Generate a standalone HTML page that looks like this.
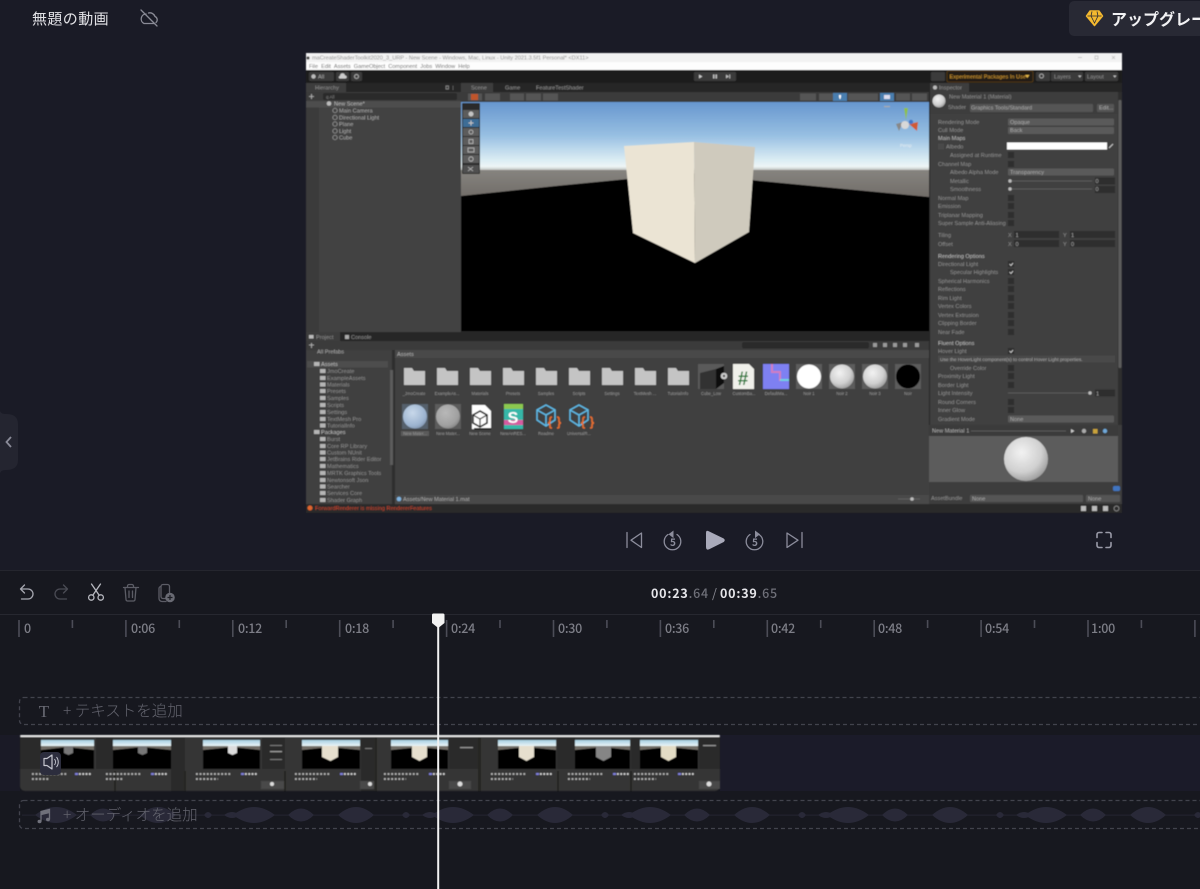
<!DOCTYPE html>
<html lang="ja"><head><meta charset="utf-8"><title>無題の動画</title>
<style>
html,body{margin:0;padding:0;background:#1a1b26;}
body{width:1200px;height:889px;overflow:hidden;position:relative;font-family:"Liberation Sans","Noto Sans CJK JP",sans-serif;}
.abs{position:absolute;}
.tm{left:0;top:571px;width:1200px;height:318px;background:#17181f;}
.jp{font-family:"Noto Sans CJK JP","Liberation Sans",sans-serif;}
svg{position:absolute;left:0;top:0;}
.t{font-family:"Liberation Sans",sans-serif;font-size:5.6px;fill:#a8a8a8;}
.d{fill:#8e8e8e;}
.b{fill:#bdbdbd;}
.s{font-size:4.2px;fill:#999;text-anchor:middle;}
.lb{font-family:"Noto Sans CJK JP","Liberation Sans",sans-serif;font-size:12.5px;font-weight:500;letter-spacing:-.3px;fill:#7d7e87;}
</style></head><body>

<div class="abs tm"></div>
<div class="abs" style="left:0;top:570px;width:1200px;height:1px;background:#25262e;"></div>
<div class="abs" style="left:0;top:614px;width:1200px;height:1px;background:#272830;"></div>

<div class="abs jp" style="left:32px;top:7px;font-size:15px;line-height:24px;letter-spacing:.4px;color:#e2e2e6;">無題の動画</div>
<div class="abs" style="left:1069px;top:1px;width:140px;height:35px;background:#282934;border-radius:5px;"></div>
<div class="abs jp" style="left:1111px;top:6px;width:89px;overflow:hidden;white-space:nowrap;font-size:16px;line-height:24px;font-weight:700;color:#f2f2f4;">アップグレード</div>

<div class="abs" style="left:720px;top:735px;width:480px;height:56px;background:#1b1b29;"></div>
<div class="abs" style="left:0;top:735px;width:20px;height:56px;background:#1a1a26;"></div>

<svg width="1200" height="889" viewBox="0 0 1200 889" xmlns="http://www.w3.org/2000/svg">
<defs>
<filter id="bl" x="-2%" y="-2%" width="104%" height="104%"><feGaussianBlur stdDeviation="0.55"/></filter>
<filter id="bl2" x="-2%" y="-2%" width="104%" height="104%"><feGaussianBlur stdDeviation="0.55"/></filter>
<linearGradient id="sky" x1="0" y1="0" x2="0" y2="1">
<stop offset="0" stop-color="#6797cf"/><stop offset=".35" stop-color="#97bfe2"/><stop offset=".6" stop-color="#d8ebf3"/><stop offset=".68" stop-color="#eef6f6"/><stop offset=".74" stop-color="#a0a09c"/><stop offset="1" stop-color="#a0a09c"/></linearGradient>
<linearGradient id="grd" x1="0" y1="0" x2="0" y2="1"><stop offset="0" stop-color="#86847f"/><stop offset="1" stop-color="#6f6a66"/></linearGradient>
<radialGradient id="sph" cx=".4" cy=".35" r=".75"><stop offset="0" stop-color="#f2f2f2"/><stop offset=".6" stop-color="#d0d0d0"/><stop offset="1" stop-color="#8d8d8d"/></radialGradient>
<radialGradient id="sphg" cx=".4" cy=".35" r=".75"><stop offset="0" stop-color="#b8b8b8"/><stop offset=".7" stop-color="#a0a0a0"/><stop offset="1" stop-color="#7c7c7c"/></radialGradient>
<radialGradient id="sphb" cx=".4" cy=".35" r=".75"><stop offset="0" stop-color="#c8d8ea"/><stop offset=".7" stop-color="#9db4d0"/><stop offset="1" stop-color="#7b8ea8"/></radialGradient>
<linearGradient id="tsky" x1="0" y1="0" x2="0" y2="1"><stop offset="0" stop-color="#a6cfe2"/><stop offset="1" stop-color="#eaf4f6"/></linearGradient>
<g id="wv" fill="#292938">
<path d="M233 815Q254 799 275 815Q254 831 233 815Z"/>
<path d="M288 815Q301 802 314 815Q301 828 288 815Z"/>
<path d="M338 815Q356 799 374 815Q356 831 338 815Z"/>
<path d="M402 815Q406 809 410 815Q406 821 402 815Z"/>
<path d="M422 815Q430 809 438 815Q430 821 422 815Z"/>
</g>
</defs>

<!-- ===== left handle ===== -->
<path d="M0 410 Q0 414 6 414 Q18 414 18 424 V460 Q18 470 6 470 Q0 470 0 474Z" fill="#242530"/>
<path d="M11 437 L6.5 442 L11 447" fill="none" stroke="#8a8b98" stroke-width="1.800"/>

<!-- ===== header icons ===== -->
<g fill="none" stroke="#8a8b96" stroke-width="1.300" stroke-linecap="round">
<path d="M146 14 A5 5 0 0 0 144 23.500 H154.500 M156 22.500 A3.600 3.600 0 0 0 155 16.500 A5.500 5.500 0 0 0 148.500 13"/>
<path d="M141 10 L157 26"/>
</g>
<path d="M1090 11 H1099 L1102.500 16 L1094.500 25.500 L1086.500 16Z" fill="#f4b92f" stroke="#f4b92f" stroke-width="1.500" stroke-linejoin="round"/>
<path d="M1087.500 16 H1101.500 M1092 11.500 L1091 16 L1094.500 23 L1098 16 L1097 11.500" fill="none" stroke="#282934" stroke-width=".8"/>

<!-- ===== video frame ===== -->
<g filter="url(#bl)">
<rect x="306" y="53" width="816" height="460" fill="#3c3c3c"/>
<rect x="306" y="53" width="816" height="9" fill="#f2f2f2"/>
<rect x="306" y="62" width="816" height="8" fill="#fdfdfd"/>
<text x="312" y="59.700" class="t" style="fill:#8c8c8c;">maCreateShaderToolkit2020_3_URP - New Scene - Windows, Mac, Linux - Unity 2021.3.5f1 Personal* &lt;DX11&gt;</text>
<text x="309" y="68" class="t" style="fill:#666;">File&#160;&#160;Edit&#160;&#160;Assets&#160;&#160;GameObject&#160;&#160;Component&#160;&#160;Jobs&#160;&#160;Window&#160;&#160;Help</text>
<circle cx="308" cy="58" r="1.600" fill="#444"/>
<path d="M1078 57.500h4M1095 56h3v3h-3zM1112 56l3 3M1115 56l-3 3" stroke="#bbb" stroke-width=".7" fill="none"/>
<rect x="306" y="70" width="816" height="13" fill="#1e1e1e"/>
<rect x="309" y="72" width="25" height="9" rx="1.500" fill="#3a3a3a"/>
<rect x="336" y="72" width="13" height="9" rx="1.500" fill="#3a3a3a"/>
<rect x="351" y="72" width="11" height="9" rx="1.500" fill="#3a3a3a"/>
<circle cx="313.500" cy="76.500" r="2.200" fill="#bbb"/><text x="318" y="78.500" class="t">All</text>
<path d="M339.500 78.500h6a1.500 1.500 0 0 0-.5-3 a2.500 2.500 0 0 0-5 .5a1.300 1.300 0 0 0-.5 2.500z" fill="#ccc"/>
<circle cx="356.500" cy="76.500" r="2" fill="none" stroke="#aaa"/>
<rect x="694" y="72" width="42" height="9" rx="1" fill="#3a3a3a"/>
<path d="M699 74.500l3.500 2-3.500 2z" fill="#ccc"/><path d="M713 74.500h1.500v4H713zm2.500 0H717v4h-1.500z" fill="#bbb"/><path d="M726 74.500l3 2-3 2zm3.200 0h1v4h-1z" fill="#bbb"/>
<rect x="931" y="72" width="14" height="9" rx="1" fill="#3a3a3a"/>
<rect x="947" y="71" width="86" height="11" rx="1.500" fill="#231f17" stroke="#5b3f0f" stroke-width=".8"/>
<text x="949.500" y="78.500" class="t" style="fill:#d69a30;font-size:5.600px;">Experimental Packages In Use</text><path d="M1025 75h4.500l-2.200 3z" fill="#e8b84a"/>
<rect x="1036" y="72" width="14" height="9" rx="1" fill="#3a3a3a"/><circle cx="1041.500" cy="76" r="2" fill="none" stroke="#bbb" stroke-width=".8"/>
<rect x="1051" y="72" width="32" height="9" rx="1" fill="#3a3a3a"/><text x="1054" y="78.500" class="t d">Layers</text><path d="M1078 75.500h3.500l-1.700 2.200z" fill="#bbb"/>
<rect x="1085" y="72" width="33" height="9" rx="1" fill="#3a3a3a"/><text x="1087" y="78.500" class="t d">Layout</text><path d="M1113 75.500h3.500l-1.700 2.200z" fill="#bbb"/>

<!-- hierarchy -->
<rect x="306" y="83" width="155" height="9" fill="#282828"/>
<rect x="306" y="83" width="40" height="9" fill="#3c3c3c"/>
<text x="315" y="89.500" class="t d">Hierarchy</text>
<path d="M446 86h2.500v3H446zM453 86v.8M453 87.500v.8M453 89v.8" stroke="#999" stroke-width=".7" fill="none"/>
<rect x="306" y="92" width="155" height="9" fill="#3a3a3a"/>
<path d="M309 96.500h5M311.500 94v5" stroke="#bbb" stroke-width=".8"/>
<rect x="323" y="93" width="134" height="7" rx="2" fill="#2a2a2a"/><text x="326" y="98.500" class="t" style="font-size:4.500px;fill:#888;">q All</text>
<rect x="306" y="101" width="155" height="231" fill="#434343"/>
<rect x="306" y="101" width="13" height="231" fill="#3a3a3a"/>
<rect x="306" y="101" width="155" height="6.500" fill="#4e4e4e"/>
<circle cx="329" cy="103.500" r="2.300" fill="#bbb"/>
<text x="334" y="105.700" class="t" style="fill:#b8b8b8;">New Scene*</text>
<g fill="none" stroke="#a0a0a0" stroke-width=".7"><circle cx="335" cy="110.500" r="2.200"/><circle cx="335" cy="117.500" r="2.200"/><circle cx="335" cy="124" r="2.200"/><circle cx="335" cy="131" r="2.200"/><circle cx="335" cy="137.500" r="2.200"/></g>
<text x="339" y="112.500" class="t">Main Camera</text><text x="339" y="119.300" class="t">Directional Light</text><text x="339" y="126" class="t">Plane</text><text x="339" y="133" class="t">Light</text><text x="339" y="139.700" class="t">Cube</text>

<!-- scene -->
<rect x="461" y="83" width="468" height="9" fill="#282828"/>
<rect x="461" y="83" width="32" height="9" fill="#3c3c3c"/>
<text x="471" y="89.500" class="t d">Scene</text><text x="505" y="89.500" class="t d">Game</text><text x="536" y="89.500" class="t d">FeatureTestShader</text>
<rect x="461" y="92" width="468" height="10" fill="#3a3a3a"/>
<g fill="#555"><rect x="468" y="93.500" width="14" height="7"/><rect x="485" y="93.500" width="15" height="7"/><rect x="510" y="93.500" width="14" height="7"/><rect x="526" y="93.500" width="15" height="7"/><rect x="543" y="93.500" width="15" height="7"/>
<rect x="800" y="93.500" width="16" height="7"/><rect x="819" y="93.500" width="14" height="7"/><rect x="848" y="93.500" width="14" height="7"/><rect x="862" y="93.500" width="16" height="7"/><rect x="896" y="93.500" width="14" height="7"/><rect x="912" y="93.500" width="15" height="7"/></g>
<rect x="471" y="94" width="7" height="6" fill="#c0552b"/>
<rect x="833" y="93" width="14" height="8" fill="#4a7eaf"/><rect x="880" y="93" width="14" height="8" fill="#4a7eaf"/>
<path d="M839 95h2v2l-.6 2h-.8l-.6-2z" fill="#fff"/><rect x="884" y="95" width="6" height="4" fill="#dde"/>
<rect x="461" y="102" width="468" height="95" fill="url(#sky)"/>
<rect x="461" y="170" width="468" height="30" fill="url(#grd)"/>
<polygon points="461,196 556,186 690,173 760,181 929,197 929,332 461,332" fill="#000"/>
<polygon points="624,146 694,142 695,263 633,233" fill="#ebe4d4"/>
<polygon points="694,142 755,147 749,232 695,263" fill="#cfcabd"/>
<rect x="461" y="331" width="468" height="1.500" fill="#222"/>
<!-- tool palette -->
<rect x="462" y="103" width="18" height="71" rx="1" fill="#2a2a2a"/>
<g fill="#5b5b5b"><rect x="463" y="110" width="16" height="8"/><rect x="463" y="128" width="16" height="8"/><rect x="463" y="137" width="16" height="8"/><rect x="463" y="146" width="16" height="8"/><rect x="463" y="155" width="16" height="8"/></g>
<rect x="463" y="119" width="16" height="8" fill="#3e6d96"/>
<rect x="463" y="165" width="16" height="8" fill="#505050"/>
<circle cx="471" cy="114" r="2.500" fill="#c4c4c4"/><rect x="468.500" y="122.500" width="5" height="1" fill="#c4c4c4"/><rect x="470.500" y="120.500" width="1" height="5" fill="#c4c4c4"/>
<g fill="none" stroke="#bbb" stroke-width=".8"><circle cx="471" cy="132" r="2"/><rect x="469" y="139.500" width="4" height="4"/><rect x="468" y="148" width="6" height="4"/><circle cx="471" cy="159" r="2.200"/><path d="M468 167l5 4M473 167l-5 4"/></g>
<!-- gizmo -->
<polygon points="904,108 908,108 906,120" fill="#8ec04a"/>
<polygon points="909,124 918,122 917,131" fill="#d05a35"/>
<polygon points="896,124 903,122 899,131" fill="#888"/>
<circle cx="905" cy="125" r="4" fill="#d8d8d8"/><circle cx="911" cy="122" r="2.200" fill="#3f76c8"/>
<rect x="884" y="106" width="6" height="1.200" fill="#aaa"/>
<text x="900" y="147" class="t" style="fill:#e8eef2;font-size:4.500px;">Persp</text>

<!-- inspector -->
<rect x="929" y="83" width="193" height="9" fill="#282828"/>
<rect x="929" y="83" width="40" height="9" fill="#3c3c3c"/>
<text x="939" y="89.500" class="t d">Inspector</text><circle cx="935" cy="87.500" r="2" fill="#bbb"/>
<rect x="929" y="92" width="193" height="22" fill="#3e3e3e"/>
<circle cx="939" cy="101" r="6.500" fill="url(#sph)"/>
<text x="949" y="98.500" class="t d">New Material 1 (Material)</text>
<text x="948" y="109" class="t d">Shader</text>
<rect x="970" y="104" width="123" height="8" rx="1" fill="#555"/><text x="971" y="109.500" class="t">Graphics Tools/Standard</text>
<rect x="1097" y="104" width="17" height="8" rx="1" fill="#555"/><text x="1099" y="109.500" class="t">Edit...</text>
<rect x="929" y="114" width="189" height="311" fill="#3f3f3f"/>
<rect x="1118" y="92" width="4" height="333" fill="#2f2f2f"/><rect x="1118.500" y="100" width="3" height="268" rx="1" fill="#5b5b5b"/>
<rect x="929" y="83" width="1" height="430" fill="#232323"/>
<text x="938" y="124" class="t d">Rendering Mode</text>
<text x="938" y="132" class="t d">Cull Mode</text>
<text x="938" y="140" class="t b">Main Maps</text>
<text x="946" y="148.500" class="t d">Albedo</text>
<text x="950" y="157" class="t d">Assigned at Runtime</text>
<text x="938" y="166" class="t d">Channel Map</text>
<text x="950" y="174" class="t d">Albedo Alpha Mode</text>
<text x="950" y="183" class="t d">Metallic</text>
<text x="950" y="191" class="t d">Smoothness</text>
<text x="938" y="200" class="t d">Normal Map</text>
<text x="938" y="208" class="t d">Emission</text>
<text x="938" y="217" class="t d">Triplanar Mapping</text>
<text x="938" y="225" class="t d">Super Sample Anti-Aliasing</text>
<text x="938" y="237" class="t d">Tiling</text>
<text x="938" y="246" class="t d">Offset</text>
<text x="938" y="258" class="t b">Rendering Options</text>
<text x="938" y="266" class="t d">Directional Light</text>
<text x="950" y="274" class="t d">Specular Highlights</text>
<text x="938" y="283" class="t d">Spherical Harmonics</text>
<text x="938" y="291" class="t d">Reflections</text>
<text x="938" y="300" class="t d">Rim Light</text>
<text x="938" y="308" class="t d">Vertex Colors</text>
<text x="938" y="317" class="t d">Vertex Extrusion</text>
<text x="938" y="325" class="t d">Clipping Border</text>
<text x="938" y="334" class="t d">Near Fade</text>
<text x="938" y="345" class="t b">Fluent Options</text>
<text x="938" y="353" class="t d">Hover Light</text>
<text x="950" y="370" class="t d">Override Color</text>
<text x="938" y="378" class="t d">Proximity Light</text>
<text x="938" y="387" class="t d">Border Light</text>
<text x="938" y="395" class="t d">Light Intensity</text>
<text x="938" y="404" class="t d">Round Corners</text>
<text x="938" y="412" class="t d">Inner Glow</text>
<text x="938" y="421" class="t d">Gradient Mode</text>
<g fill="#5a5a5a">
<rect x="1008" y="118.500" width="106" height="7" rx="1"/><rect x="1008" y="127" width="106" height="7" rx="1"/><rect x="1008" y="168.500" width="106" height="7" rx="1"/><rect x="1008" y="415.500" width="106" height="7" rx="1"/>
</g>
<text x="1010" y="124" class="t">Opaque</text><text x="1010" y="132" class="t">Back</text><text x="1010" y="174" class="t">Transparency</text><text x="1010" y="421" class="t">None</text>
<rect x="1007" y="142.500" width="100" height="7" fill="#fff"/>
<path d="M1109 148l4-4" stroke="#ccc" stroke-width="1"/>
<rect x="938" y="143.500" width="6" height="6" fill="#4a4a4a"/>
<g fill="#2e2e2e">
<rect x="1008" y="152" width="6" height="6"/><rect x="1008" y="161" width="6" height="6"/><rect x="1008" y="195" width="6" height="6"/><rect x="1008" y="203" width="6" height="6"/><rect x="1008" y="212" width="6" height="6"/><rect x="1008" y="220" width="6" height="6"/>
<rect x="1008" y="261" width="6" height="6"/><rect x="1008" y="269" width="6" height="6"/><rect x="1008" y="278" width="6" height="6"/><rect x="1008" y="286" width="6" height="6"/><rect x="1008" y="295" width="6" height="6"/><rect x="1008" y="303" width="6" height="6"/><rect x="1008" y="312" width="6" height="6"/><rect x="1008" y="320" width="6" height="6"/><rect x="1008" y="329" width="6" height="6"/>
<rect x="1008" y="348" width="6" height="6"/><rect x="1008" y="365" width="6" height="6"/><rect x="1008" y="373" width="6" height="6"/><rect x="1008" y="382" width="6" height="6"/><rect x="1008" y="399" width="6" height="6"/><rect x="1008" y="407" width="6" height="6"/>
<rect x="1095" y="177.500" width="20" height="7"/><rect x="1095" y="186" width="20" height="7"/><rect x="1095" y="389.500" width="20" height="7"/>
<rect x="1014" y="231" width="45" height="7"/><rect x="1070" y="231" width="45" height="7"/><rect x="1014" y="240" width="45" height="7"/><rect x="1070" y="240" width="45" height="7"/>
</g>
<path d="M1009.500 264l1.500 1.500 2-2.500M1009.500 272l1.500 1.500 2-2.500M1009.500 351l1.500 1.500 2-2.500" fill="none" stroke="#ddd" stroke-width=".8"/>
<path d="M1010 181h82M1010 189h82M1008 393h84" stroke="#666" stroke-width=".8"/>
<g fill="#bbb"><circle cx="1010" cy="181" r="1.700"/><circle cx="1010" cy="189" r="1.700"/><circle cx="1090" cy="393" r="1.700"/></g>
<text x="1095.500" y="183" class="t">0</text><text x="1095.500" y="191" class="t">0</text><text x="1096" y="395.500" class="t">1</text>
<text x="1008" y="237" class="t d">X</text><text x="1015.500" y="237" class="t">1</text><text x="1063" y="237" class="t d">Y</text><text x="1071" y="237" class="t">1</text>
<text x="1008" y="246" class="t d">X</text><text x="1015.500" y="246" class="t">0</text><text x="1063" y="246" class="t d">Y</text><text x="1071" y="246" class="t">0</text>
<rect x="938" y="355.500" width="177" height="7" fill="#4a4a4a"/>
<text x="940" y="361" class="t" style="font-size:4.800px;">Use the HoverLight component(s) to control Hover Light properties.</text>
<!-- preview -->
<rect x="929" y="425" width="193" height="11" fill="#3a3a3a"/>
<text x="932" y="432.500" class="t" style="fill:#b0b0b0;">New Material 1</text>
<path d="M971 431h95" stroke="#666" stroke-width=".8"/>
<path d="M1071 429l3.500 2-3.500 2z" fill="#ccc"/><circle cx="1084" cy="431" r="2.200" fill="#aaa"/><rect x="1093" y="429" width="4.500" height="4.500" fill="#c9a33a"/><circle cx="1105" cy="431" r="2.200" fill="#6fa8d8"/>
<rect x="929" y="436" width="189" height="46" fill="#5c5c5c"/>
<rect x="1118" y="425" width="4" height="80" fill="#3c3c3c"/>
<circle cx="1026" cy="459" r="22" fill="url(#sph)"/>
<rect x="929" y="482" width="193" height="22" fill="#3d3d3d"/>
<rect x="1113" y="486" width="7" height="5" rx="1.500" fill="#3f75c0"/>
<text x="931" y="500" class="t d">AssetBundle</text>
<rect x="970" y="495" width="113" height="7" rx="1" fill="#555"/><text x="972" y="500.500" class="t">None</text>
<rect x="1086" y="495" width="34" height="7" rx="1" fill="#555"/><text x="1088" y="500.500" class="t">None</text>

<!-- project -->
<rect x="306" y="332" width="623" height="9" fill="#282828"/>
<rect x="306" y="332" width="34" height="9" fill="#3c3c3c"/>
<rect x="309" y="335" width="4.500" height="3.500" fill="#bbb"/>
<text x="316" y="339" class="t d">Project</text><text x="351" y="339" class="t d">Console</text><rect x="345" y="335" width="4" height="4" fill="#aaa"/>
<rect x="306" y="341" width="623" height="9" fill="#3a3a3a"/>
<path d="M309 345h5M311.500 343v5" stroke="#bbb" stroke-width=".8"/>
<rect x="742" y="342" width="127" height="6.500" rx="2" fill="#2c2c2c"/>
<g fill="#999"><rect x="873" y="343" width="4" height="4"/><rect x="883" y="343" width="4" height="4"/><rect x="893" y="343" width="4" height="4"/><rect x="903" y="343" width="4" height="4"/><rect x="915" y="343" width="4" height="4"/></g>
<rect x="306" y="350" width="87" height="155" fill="#3f3f3f"/>
<rect x="392" y="350" width="3" height="155" fill="#2f2f2f"/>
<rect x="390" y="370" width="3" height="95" fill="#5c5c5c"/>
<text x="317" y="353.500" class="t">All Prefabs</text>
<rect x="307" y="361" width="81" height="6.500" fill="#4d4d4d"/>
<text x="321" y="366.200" class="t b">Assets</text>
<text x="327" y="373" class="t d">JmoCreate</text>
<text x="327" y="380" class="t d">ExampleAssets</text>
<text x="327" y="386.400" class="t d">Materials</text>
<text x="327" y="393" class="t d">Presets</text>
<text x="327" y="400" class="t d">Samples</text>
<text x="327" y="407" class="t d">Scripts</text>
<text x="327" y="414" class="t d">Settings</text>
<text x="327" y="421" class="t d">TextMesh Pro</text>
<text x="327" y="427.400" class="t d">TutorialInfo</text>
<text x="321" y="434.200" class="t b">Packages</text>
<text x="327" y="441" class="t d">Burst</text>
<text x="327" y="448" class="t d">Core RP Library</text>
<text x="327" y="454.400" class="t d">Custom NUnit</text>
<text x="327" y="461" class="t d">JetBrains Rider Editor</text>
<text x="327" y="468" class="t d">Mathematics</text>
<text x="327" y="475" class="t d">MRTK Graphics Tools</text>
<text x="327" y="482" class="t d">Newtonsoft Json</text>
<text x="327" y="488.400" class="t d">Searcher</text>
<text x="327" y="495" class="t d">Services Core</text>
<text x="327" y="502" class="t d">Shader Graph</text>
<g fill="#b5b5b5">
<rect x="314" y="362" width="5.500" height="4"/><rect x="320" y="369" width="5.500" height="4"/><rect x="320" y="376" width="5.500" height="4"/><rect x="320" y="382.500" width="5.500" height="4"/><rect x="320" y="389" width="5.500" height="4"/><rect x="320" y="396" width="5.500" height="4"/><rect x="320" y="403" width="5.500" height="4"/><rect x="320" y="410" width="5.500" height="4"/><rect x="320" y="417" width="5.500" height="4"/><rect x="320" y="423.500" width="5.500" height="4"/><rect x="314" y="430" width="5.500" height="4"/><rect x="320" y="437" width="5.500" height="4"/><rect x="320" y="444" width="5.500" height="4"/><rect x="320" y="450.500" width="5.500" height="4"/><rect x="320" y="457" width="5.500" height="4"/><rect x="320" y="464" width="5.500" height="4"/><rect x="320" y="471" width="5.500" height="4"/><rect x="320" y="478" width="5.500" height="4"/><rect x="320" y="484.500" width="5.500" height="4"/><rect x="320" y="491" width="5.500" height="4"/><rect x="320" y="498" width="5.500" height="4"/>
</g>
<rect x="395" y="350" width="534" height="8" fill="#4a4a4a"/>
<text x="397" y="356" class="t" style="fill:#b0b0b0;">Assets</text>
<rect x="395" y="358" width="534" height="137" fill="#404040"/>
<!-- folders -->
<g fill="#c4c4c4">
<path d="M404 368h8l2 3h11v14h-21z"/>
<path d="M437 368h8l2 3h11v14h-21z"/><path d="M470 368h8l2 3h11v14h-21z"/><path d="M503 368h8l2 3h11v14h-21z"/><path d="M536 368h8l2 3h11v14h-21z"/><path d="M569 368h8l2 3h11v14h-21z"/><path d="M602 368h8l2 3h11v14h-21z"/><path d="M635 368h8l2 3h11v14h-21z"/><path d="M668 368h8l2 3h11v14h-21z"/>
</g>
<text x="414" y="395" class="t s">_JmoCreate</text><text x="447" y="395" class="t s">ExampleAs...</text><text x="480" y="395" class="t s">Materials</text><text x="513" y="395" class="t s">Presets</text><text x="546" y="395" class="t s">Samples</text><text x="579" y="395" class="t s">Scripts</text><text x="612" y="395" class="t s">Settings</text><text x="645" y="395" class="t s">TextMesh ...</text><text x="678" y="395" class="t s">TutorialInfo</text><text x="711" y="395" class="t s">Cube_Low</text><text x="744" y="395" class="t s">CustomBa...</text><text x="776" y="395" class="t s">DefaultMa...</text><text x="809" y="395" class="t s">Noir 1</text><text x="842" y="395" class="t s">Noir 2</text><text x="875" y="395" class="t s">Noir 3</text><text x="908" y="395" class="t s">Noir</text>
<!-- cube_low -->
<rect x="698" y="364" width="26" height="25" fill="#5a5a5a"/>
<polygon points="700,373 716,369 716,389 700,389" fill="#333"/><polygon points="716,369 724,366 724,383 716,389" fill="#0b0b0b"/>
<circle cx="724" cy="376" r="3.300" fill="#ccc"/><circle cx="724" cy="376" r="1.200" fill="#444"/>
<!-- # doc -->
<path d="M733 364h16l5 5v20h-21z" fill="#f0f0ea"/>
<text x="743" y="385" style="font-family:'Liberation Sans',sans-serif;font-weight:bold;font-size:19px;fill:#2b7a3a;text-anchor:middle;">#</text>
<!-- normal -->
<rect x="763" y="364" width="26" height="25" fill="#7e80f2"/>
<path d="M772 364v8h8v8h9" fill="none" stroke="#d07dc0" stroke-width="2"/><path d="M780 380h9" stroke="#6fd0e0" stroke-width="2"/>
<!-- spheres -->
<g fill="#5b5b5b"><rect x="796" y="364" width="26" height="25"/><rect x="829" y="364" width="26" height="25"/><rect x="862" y="364" width="26" height="25"/><rect x="895" y="364" width="26" height="25"/></g>
<circle cx="809" cy="376.500" r="12" fill="#fff"/><circle cx="842" cy="376.500" r="12" fill="url(#sph)"/><circle cx="875" cy="376.500" r="12" fill="url(#sph)"/><circle cx="908" cy="376.500" r="12" fill="#000"/>
<!-- row 2 -->
<rect x="402" y="404" width="26" height="25" fill="#55606c"/><circle cx="415" cy="416.500" r="12" fill="url(#sphb)"/>
<rect x="435" y="404" width="26" height="25" fill="#5b5b5b"/><circle cx="448" cy="416.500" r="12" fill="url(#sphg)"/>
<path d="M472 405h13l6 6v18h-19z" fill="#fff"/><path d="M474 428h17v1.500h-17z" fill="#000"/>
<path d="M480 411l7 4v8l-7 4-7-4v-8z" fill="none" stroke="#222" stroke-width="1.600"/><path d="M480 419l7-4M480 419l-7-4M480 419v8" stroke="#222" stroke-width="1.200"/>
<path d="M504 404h13l6 5v20h-19z" fill="#34b7a8"/><path d="M504 420h19v5h-19z" fill="#d65aa0"/><path d="M504 404h19v5h-19z" fill="#8cc850"/>
<text x="513" y="423" style="font-family:'Liberation Sans',sans-serif;font-weight:bold;font-size:16px;fill:#fff;text-anchor:middle;">S</text>
<g fill="none" stroke="#5fb9e6" stroke-width="1.500"><path d="M546 405l9 5v10l-9 6-9-6v-10zM537 410l9 5 9-5M546 415v11"/><path d="M579 405l9 5v10l-9 6-9-6v-10zM570 410l9 5 9-5M579 415v11"/></g>
<g fill="none" stroke="#e8702f" stroke-width="1.600"><path d="M552 417q-2 0-2 2v2q0 2-2 2 2 0 2 2v2q0 1 2 1M557 417q2 0 2 2v2q0 2 2 2-2 0-2 2v2q0 1-2 1"/><path d="M585 417q-2 0-2 2v2q0 2-2 2 2 0 2 2v2q0 1 2 1M590 417q2 0 2 2v2q0 2 2 2-2 0-2 2v2q0 1-2 1"/></g>
<rect x="401" y="431" width="28" height="5" fill="#5a5a5a"/>
<text x="415" y="435" class="t s">New Mater...</text><text x="448" y="435" class="t s">New Mater...</text><text x="480" y="435" class="t s">New Scene</text><text x="513" y="435" class="t s">NewAnRES...</text><text x="546" y="435" class="t s">Readme</text><text x="579" y="435" class="t s">UniversalR...</text>
<rect x="395" y="495" width="534" height="9" fill="#4a4a4a"/>
<circle cx="399" cy="499" r="2.300" fill="#7fb3e0"/>
<text x="403" y="501" class="t">Assets/New Material 1.mat</text>
<path d="M898 499h22" stroke="#6a6a6a" stroke-width=".8"/><circle cx="912" cy="499" r="1.800" fill="#bbb"/>
<!-- status -->
<rect x="306" y="504" width="816" height="9" fill="#292929"/>
<circle cx="310" cy="508" r="2.500" fill="#e0662e"/>
<text x="315" y="510" class="t" style="fill:#c9452d;">ForwardRenderer is missing RendererFeatures</text>
<g fill="#bbb"><rect x="1081" y="506" width="5" height="5"/><rect x="1092" y="506" width="5" height="5"/><rect x="1103" y="506" width="5" height="5"/></g><circle cx="1116.500" cy="508.500" r="2.500" fill="none" stroke="#999" stroke-width=".7"/>
</g>

<!-- ===== transport ===== -->
<g fill="none" stroke="#8c8d9c" stroke-width="1.300" stroke-linejoin="round" stroke-linecap="round">
<path d="M627 532.500v15M641.500 533v14.500l-10.500-7.300z"/>
<path d="M668 534.500 A8.300 8.300 0 1 0 677 534.500"/>
<path d="M787 533v14.500l11-7.300zM802 532.500v15"/>
<path d="M750 534.500 A8.300 8.300 0 1 0 759 534.500"/>
<path d="M1097 537.500v-3a2 2 0 0 1 2-2h3M1106 532.500h3a2 2 0 0 1 2 2v3M1111 542.500v3a2 2 0 0 1-2 2h-3M1102 547.500h-3a2 2 0 0 1-2-2v-3" stroke="#9a9ba8" stroke-width="1.600"/>
</g>
<path d="M673.500 530.500l-5 3.800 5 3.800z" fill="#8c8d9c"/>
<path d="M755 530.500l5 3.800-5 3.800z" fill="#8c8d9c"/>
<text x="673" y="546" style="font-family:'Noto Sans CJK JP','Liberation Sans',sans-serif;font-size:10px;font-weight:700;fill:#8c8d9c;text-anchor:middle;">5</text>
<text x="755" y="546" style="font-family:'Noto Sans CJK JP','Liberation Sans',sans-serif;font-size:10px;font-weight:700;fill:#8c8d9c;text-anchor:middle;">5</text>
<path d="M708 531.500 Q706.500 530.500 706.500 533 V547 Q706.500 550 709 548.800 L723.500 541.500 Q725 540 723.500 539 Z" fill="#a9aaba" stroke="#a9aaba" stroke-linejoin="round"/>

<!-- ===== time ===== -->
<text y="598" style="font-family:'Noto Sans CJK JP','Liberation Sans',sans-serif;font-size:12.500px;letter-spacing:.8px;font-weight:700;fill:#e6e6ea;"><tspan x="651">00:23</tspan><tspan fill="#6f7079" font-weight="500">.64</tspan><tspan x="712" fill="#8a8b94" font-weight="400">/</tspan><tspan x="720">00:39</tspan><tspan fill="#6f7079" font-weight="500">.65</tspan></text>

<!-- ===== edit toolbar ===== -->
<g fill="none" stroke-linecap="round" stroke-linejoin="round" stroke-width="1.300">
<path d="M24.500 585l-4 4 4 4M20.500 589h7.500a5 5 0 0 1 0 10h-6.500" stroke="#a6a7b0"/>
<path d="M63.500 585l4 4-4 4M67.500 589h-7.500a5 5 0 0 0 0 10h6.500" stroke="#4a4b54"/>
<circle cx="91.300" cy="597.500" r="2.700" stroke="#b8b9c0"/><circle cx="100.700" cy="597.500" r="2.700" stroke="#b8b9c0"/>
<path d="M92.800 595.300L100.500 584M99.200 595.300L91.500 584" stroke="#b8b9c0"/>
<path d="M123.500 587.500h15M127.500 587.500v-1.500a1.500 1.500 0 0 1 1.500-1.500h3a1.500 1.500 0 0 1 1.500 1.500v1.500M125 587.500l1 12a1.500 1.500 0 0 0 1.500 1.500h6a1.500 1.500 0 0 0 1.500-1.500l1-12M129 591v6.500M132.500 591v6.500" stroke="#5c5d66"/>
<path d="M161 586.500a2 2 0 0 0-2 2v10a3 3 0 0 0 3 3h4" stroke="#5c5d66"/>
<path d="M163 584.500h4.500a2 2 0 0 1 2 2v6M163 584.500a2 2 0 0 0-2 2v10a2 2 0 0 0 2 2h3" stroke="#5c5d66"/>
</g>
<circle cx="170" cy="597.500" r="4.800" fill="#696a73"/>
<path d="M167.500 597.500h5M170 595v5" stroke="#1b1c23" stroke-width="1.200"/>

<!-- ===== ruler ===== -->
<g stroke="#4c4d57" stroke-width="1.600">
<path d="M19 620v17M125.900 620v17M232.800 620v17M339.700 620v17M446.600 620v17M553.500 620v17M660.400 620v17M767.300 620v17M874.200 620v17M981.100 620v17M1088 620v17M1194.900 620v17"/>
<path d="M72.400 620v8M179.300 620v8M286.200 620v8M393.100 620v8M500 620v8M606.900 620v8M713.800 620v8M820.700 620v8M927.600 620v8M1034.500 620v8M1141.400 620v8"/>
</g>
<text x="24" y="633" class="lb">0</text><text x="131" y="633" class="lb">0:06</text><text x="238" y="633" class="lb">0:12</text><text x="345" y="633" class="lb">0:18</text><text x="451" y="633" class="lb">0:24</text><text x="558" y="633" class="lb">0:30</text><text x="665" y="633" class="lb">0:36</text><text x="771" y="633" class="lb">0:42</text><text x="878" y="633" class="lb">0:48</text><text x="985" y="633" class="lb">0:54</text><text x="1091" y="633" class="lb">1:00</text>

<!-- ===== dashed tracks ===== -->
<rect x="19.500" y="697.500" width="1300" height="27" rx="4" fill="none" stroke="#42434d" stroke-width="1.300" stroke-dasharray="4 3"/>
<rect x="19.500" y="800.500" width="1300" height="28" rx="4" fill="none" stroke="#42434d" stroke-width="1.300" stroke-dasharray="4 3"/>

<!-- ===== text track ===== -->
<text x="44" y="717" style="font-family:'Liberation Serif',serif;font-size:17px;fill:#6a6b75;text-anchor:middle;">T</text>
<text x="63" y="716" style="font-family:'Noto Sans CJK JP','Liberation Sans',sans-serif;font-size:15.500px;font-weight:300;fill:#62636d;">+ テキストを追加</text>

<!-- ===== waveform ===== -->
<rect x="22" y="814.700" width="1178" height=".8" fill="#272735"/>
<use href="#wv" transform="translate(-198,0)"/>
<use href="#wv"/>
<use href="#wv" transform="translate(199,0)"/>
<use href="#wv" transform="translate(396,0)"/>
<use href="#wv" transform="translate(594,0)"/>
<use href="#wv" transform="translate(792,0)"/>
<use href="#wv" transform="translate(990,0)"/>
<path d="M41 811.500v10M49.500 809.500v10M41 811.500l8.500-2v3l-8.500 2z" fill="#70717b" stroke="#70717b" stroke-width="1.300"/>
<ellipse cx="39.500" cy="821.500" rx="2" ry="1.700" fill="#70717b"/><ellipse cx="48" cy="819.500" rx="2" ry="1.700" fill="#70717b"/>
<text x="63" y="820" style="font-family:'Noto Sans CJK JP','Liberation Sans',sans-serif;font-size:15.500px;font-weight:300;fill:#62636d;">+ オーディオを追加</text>

<!-- ===== clip ===== -->
<g filter="url(#bl2)">
<rect x="20" y="735" width="700" height="56" rx="5" fill="#363634"/>
<rect x="20" y="735" width="700" height="2" rx="1" fill="#e8e8e8"/>
<g fill="#2c2c2b"><rect x="20" y="737" width="21" height="32"/><rect x="96" y="737" width="17" height="32"/><rect x="171" y="737" width="14" height="54"/><rect x="262" y="737" width="23" height="32"/><rect x="361" y="737" width="14" height="54"/><rect x="449" y="737" width="30" height="32"/><rect x="557" y="737" width="18" height="32"/><rect x="631" y="737" width="9" height="32"/><rect x="699" y="737" width="21" height="32"/></g>
<g fill="#252524"><rect x="114" y="771" width="2" height="20"/><rect x="184" y="771" width="2" height="20"/><rect x="284" y="771" width="2" height="20"/><rect x="375" y="737" width="2" height="54"/><rect x="478" y="737" width="3" height="54"/><rect x="557" y="771" width="2" height="20"/><rect x="630" y="771" width="2" height="20"/></g>
<g fill="#7a7a7a"><rect x="270" y="745" width="12" height="1"/><rect x="270" y="751" width="12" height="1.200" fill="#a0a0a0"/><rect x="270" y="759" width="12" height="1"/><rect x="460" y="747" width="13" height="1.200" fill="#999"/><rect x="703" y="745" width="13" height="1.200" fill="#999"/><rect x="365" y="748" width="7" height="1"/></g>
<rect x="261" y="781" width="23" height="8" fill="#4a4a48"/><circle cx="272" cy="784" r="2" fill="#ddd"/>
<rect x="360" y="781" width="14" height="8" fill="#4a4a48"/><circle cx="370" cy="784" r="2" fill="#ddd"/>
<rect x="449" y="781" width="22" height="8" fill="#4a4a48"/><circle cx="460" cy="784" r="2.500" fill="#ddd"/>
<rect x="699" y="781" width="21" height="8" fill="#4a4a48"/><circle cx="709" cy="784" r="2.500" fill="#ddd"/>
<g fill="#000"><rect x="41" y="746" width="53" height="23"/><rect x="113" y="746" width="58" height="23"/><rect x="203" y="746" width="57" height="23"/><rect x="302" y="746" width="58" height="23"/><rect x="391" y="746" width="57" height="23"/><rect x="498" y="746" width="58" height="23"/><rect x="575" y="746" width="55" height="23"/><rect x="640" y="746" width="58" height="23"/></g>
<g fill="url(#tsky)"><rect x="41" y="740" width="53" height="6"/><rect x="113" y="740" width="58" height="6"/><rect x="203" y="740" width="57" height="6"/><rect x="302" y="740" width="58" height="6"/><rect x="391" y="740" width="57" height="6"/><rect x="498" y="740" width="58" height="6"/><rect x="575" y="740" width="55" height="6"/><rect x="640" y="740" width="58" height="6"/></g>
<g fill="#726e68">
<polygon points="41,746 94,746 94,750 67,747 41,750"/><polygon points="113,746 171,746 171,750 142,747 113,750"/><polygon points="203,746 260,746 260,750 232,747 203,750"/><polygon points="302,746 360,746 360,750 330,747 302,750"/><polygon points="391,746 448,746 448,750 420,747 391,750"/><polygon points="498,746 556,746 556,750 527,747 498,750"/><polygon points="575,746 630,746 630,750 603,747 575,750"/><polygon points="640,746 698,746 698,750 669,747 640,750"/>
</g>
<path d="M64 746h9v7l-4.500 2-4.500-2z" fill="#777"/>
<path d="M138 746h9v7l-4.500 2-4.500-2z" fill="#777"/>
<path d="M228 746h9v7l-4.500 2-4.500-2z" fill="#dcdcdc"/>
<path d="M322 746h16v11l-7.500 4-8.500-4z" fill="#e6dfce"/>
<path d="M412 746h15v11l-7.500 4-7.500-4z" fill="#e6dfce"/>
<path d="M519 746h15v11l-7.500 4-7.500-4z" fill="#e6dfce"/>
<path d="M596 746h15v11l-7.500 4-7.500-4z" fill="#858585"/>
<path d="M661 746h15v11l-7.500 4-7.500-4z" fill="#e3dcc5"/>
<g fill="none" stroke="#bdbdbd" stroke-width="1.800" stroke-dasharray="1.800 1.800">
<path d="M32 774h35M106 774h35M196 774h35M295 774h35M384 774h35M491 774h35M568 774h35M634 774h35"/>
<path d="M32 779h18M106 779h18M196 779h22M295 779h22M384 779h22M491 779h22M568 779h22M634 779h22"/>
</g>
<g fill="#7f7fd8"><rect x="75" y="773" width="3" height="2"/><rect x="151" y="773" width="3" height="2"/><rect x="241" y="773" width="3" height="2"/><rect x="340" y="773" width="3" height="2"/><rect x="429" y="773" width="3" height="2"/><rect x="536" y="773" width="3" height="2"/><rect x="613" y="773" width="3" height="2"/><rect x="678" y="773" width="3" height="2"/></g>
<path d="M79 774h12M155 774h12M245 774h12M344 774h12M433 774h12M540 774h12M617 774h12M682 774h12" fill="none" stroke="#dedede" stroke-width="1.800" stroke-dasharray="1.800 1.500"/>
</g>
<!-- speaker -->
<rect x="40" y="752" width="21" height="23" rx="4" fill="#2c2d3d"/>
<path d="M44 758.500h3l5-3.500v14l-5-3.500h-3z" fill="none" stroke="#c5c6cf" stroke-width="1.200" stroke-linejoin="round"/>
<path d="M54.500 759a5 5 0 0 1 0 6M56.500 757a8 8 0 0 1 0 10" fill="none" stroke="#c5c6cf" stroke-width="1"/>

<!-- ===== playhead ===== -->
<rect x="437.200" y="620" width="2" height="269" fill="#f2f2f2"/>
<path d="M432 615a1.500 1.500 0 0 1 1.500-1.500h9.500a1.500 1.500 0 0 1 1.500 1.500v8l-6.300 5-6.200-5z" fill="#f2f2f2"/>
</svg>
</body></html>
